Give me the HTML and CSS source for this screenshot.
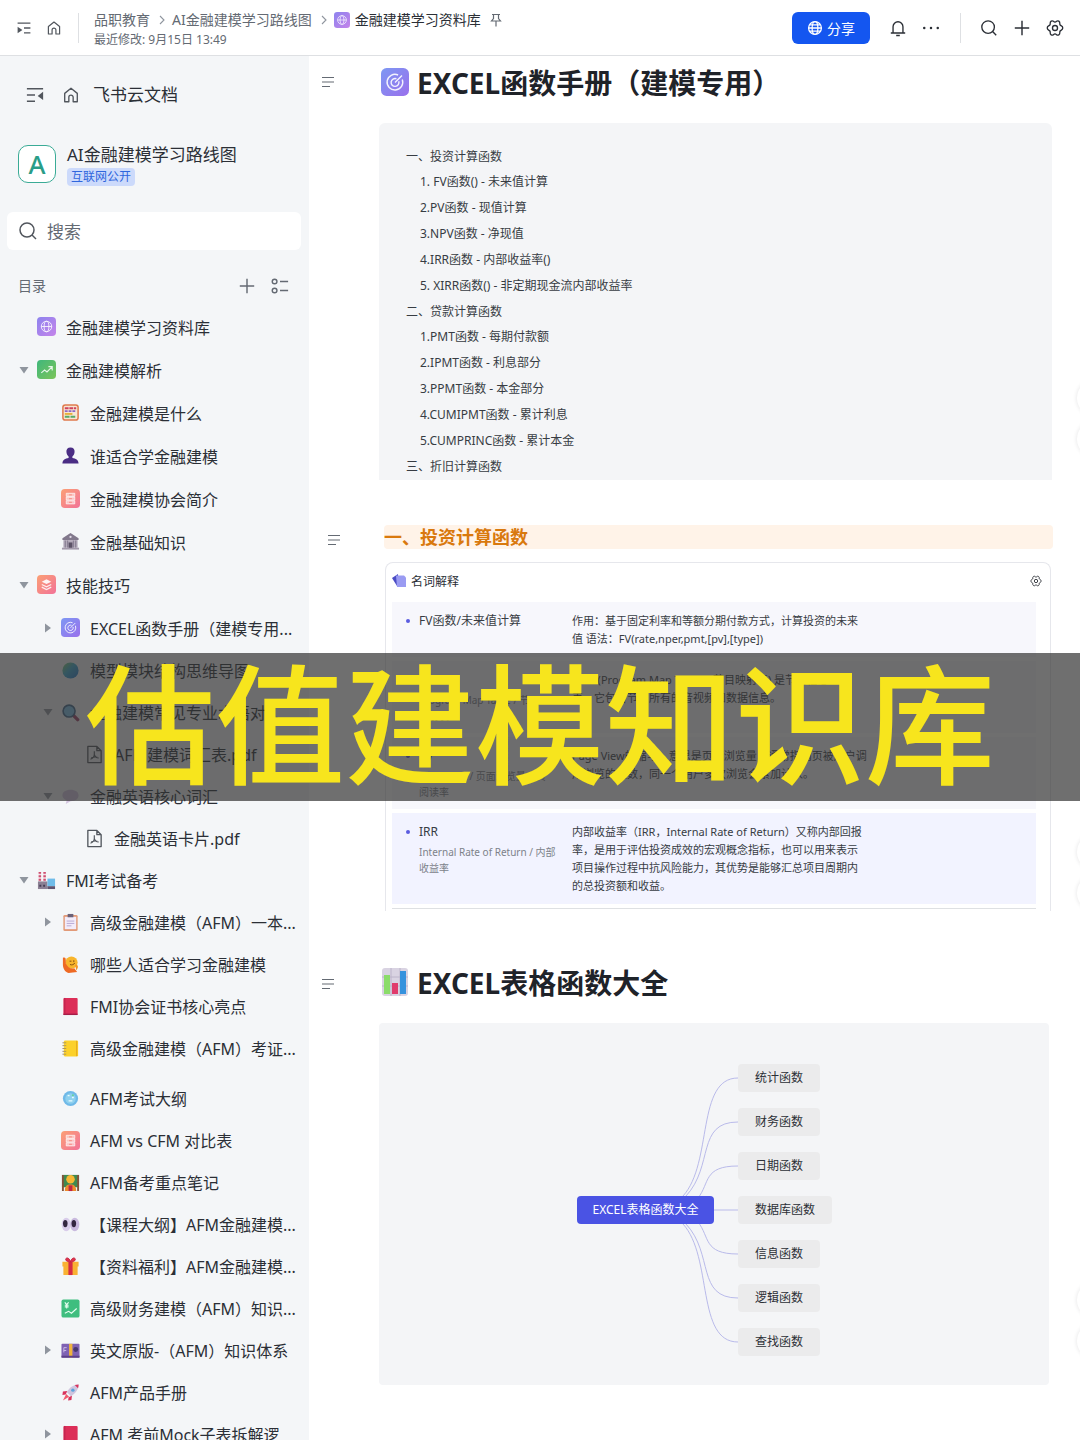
FILE: index.html
```html
<!DOCTYPE html>
<html lang="zh-CN">
<head>
<meta charset="utf-8">
<meta name="viewport" content="width=device-width, initial-scale=1">
<title>金融建模学习资料库</title>
<link rel="stylesheet" href="styles.css">
</head>
<body>
<svg class="sprite" aria-hidden="true">
  <defs>
    <linearGradient id="g-purple" x1="0" y1="0" x2="1" y2="1"><stop offset="0" stop-color="#8d83ee"/><stop offset="1" stop-color="#c584ea"/></linearGradient>
    <linearGradient id="g-green" x1="0" y1="0" x2="1" y2="1"><stop offset="0" stop-color="#3fb77c"/><stop offset="1" stop-color="#7cc45a"/></linearGradient>
    <linearGradient id="g-red" x1="0" y1="0" x2="1" y2="1"><stop offset="0" stop-color="#fba075"/><stop offset="1" stop-color="#f27298"/></linearGradient>
    <linearGradient id="g-blue" x1="0" y1="0" x2="1" y2="1"><stop offset="0" stop-color="#7d98f3"/><stop offset="1" stop-color="#9a70ec"/></linearGradient>
    <linearGradient id="g-globe" x1="0" y1="0" x2="1" y2="1"><stop offset="0" stop-color="#8fd06a"/><stop offset=".45" stop-color="#3aa9cf"/><stop offset="1" stop-color="#2472c8"/></linearGradient>
  </defs>
  <symbol id="home" viewBox="0 0 20 20"><path d="M3 8.2 10 2.5l7 5.7v9.3h-4.6v-5a2.4 2.4 0 0 0-4.8 0v5H3z" fill="none" stroke="currentColor" stroke-width="1.5" stroke-linejoin="round"/></symbol>
  <symbol id="expand" viewBox="0 0 20 20"><path d="M2 4h16M10 10h8M10 16h8" stroke="currentColor" stroke-width="1.6"/><path d="M2 8.500v8l6-4z" fill="currentColor"/></symbol>
  <symbol id="collapse" viewBox="0 0 20 20"><path d="M1 3h18M1 10h9M1 17h9" stroke="currentColor" stroke-width="1.6"/><path d="M19 6.500v9l-6-4.500z" fill="currentColor"/></symbol>
  <symbol id="search" viewBox="0 0 20 20"><circle cx="9" cy="9" r="7" fill="none" stroke="currentColor" stroke-width="1.500"/><path d="m14 14 4 4" stroke="currentColor" stroke-width="1.5"/></symbol>
  <symbol id="plus" viewBox="0 0 20 20"><path d="M10 2v16M2 10h16" stroke="currentColor" stroke-width="1.6"/></symbol>
  <symbol id="gear" viewBox="0 0 20 20"><path d="M10 3.400C12 3.400 12 1 14.200 2.400S14.600 5.300 15.700 6.700 18.600 7.600 18.600 10 16.800 11.900 15.700 13.300 16.400 16.200 14.200 17.600 12 16.600 10 16.600 8 19 5.800 17.600 5.400 14.700 4.300 13.300 1.400 12.400 1.400 10 3.200 8.100 4.300 6.700 3.600 3.800 5.800 2.400 8 3.400 10 3.400z" fill="none" stroke="currentColor" stroke-width="1.500" stroke-linejoin="round"/><circle cx="10" cy="10" r="2.800" fill="none" stroke="currentColor" stroke-width="1.500"/></symbol>
  <symbol id="lines" viewBox="0 0 14 12"><path d="M1 1.500h12M1 6h12M1 10.500h8" stroke="currentColor" stroke-width="1.200"/></symbol>
  <symbol id="chev" viewBox="0 0 8 12"><path d="m2 2 4 4-4 4" fill="none" stroke="currentColor" stroke-width="1.100"/></symbol>
  <symbol id="pin" viewBox="0 0 14 14"><path d="M3 1.500h8M4.500 1.500v4L2.500 8h9l-2-2.500v-4M7 8v5.500" fill="none" stroke="currentColor" stroke-width="1.200"/></symbol>
  <symbol id="web" viewBox="0 0 20 20"><g fill="none" stroke="currentColor" stroke-width="1.600"><circle cx="10" cy="10" r="8"/><ellipse cx="10" cy="10" rx="3.600" ry="8"/><path d="M2 10h16M3.500 6h13M3.500 14h13"/></g></symbol>
  <symbol id="tri-d" viewBox="0 0 12 12"><path d="M1.500 3h9L6 9.500z" fill="#8f959e"/></symbol>
  <symbol id="tri-r" viewBox="0 0 12 12"><path d="M3 1.500v9L9 6z" fill="#8f959e"/></symbol>
  <symbol id="i-lib" viewBox="0 0 20 20"><rect width="20" height="20" rx="4" fill="url(#g-purple)"/><g fill="none" stroke="#fff" stroke-opacity=".85"><circle cx="10" cy="10" r="5.500"/><ellipse cx="10" cy="10" rx="2.500" ry="5.500"/><path d="M4.500 10h11"/></g></symbol>
  <symbol id="i-trend" viewBox="0 0 20 20"><rect width="20" height="20" rx="4" fill="url(#g-green)"/><path d="m4.500 13.500 3.500-3 2.500 2 5-5M12 7h4v4" fill="none" stroke="#fff" stroke-opacity=".85" stroke-width="1.200"/></symbol>
  <symbol id="i-stack" viewBox="0 0 20 20"><rect width="20" height="20" rx="4" fill="url(#g-red)"/><path d="m10 4.500 5 2.500-5 2.500L5 7z" fill="#fff" fill-opacity=".9"/><path d="m5 10 5 2.500 5-2.500M5 12.800l5 2.500 5-2.500" fill="none" stroke="#fff" stroke-opacity=".85" stroke-width="1.300"/></symbol>
  <symbol id="i-drawer" viewBox="0 0 20 20"><rect width="20" height="20" rx="4" fill="url(#g-red)"/><path d="M5.500 4.500h9v3.300h-9zM5.500 8.500h9v3.200h-9zM5.500 12.400h9v3.300h-9z" fill="#fff" fill-opacity=".5" stroke="#fff" stroke-width=".7"/><path d="M8.500 6.200h3M8.500 10.200h3M8.500 14h3" stroke="#f58a80"/></symbol>
  <symbol id="i-target" viewBox="0 0 20 20"><rect width="20" height="20" rx="4" fill="url(#g-blue)"/><g fill="none" stroke="#fff" stroke-opacity=".9"><path d="M12.200 5a5.600 5.600 0 1 0 3 3.200M11 7.700a2.800 2.800 0 1 0 1.700 1.800M10 10.300l5-5"/></g></symbol>
  <symbol id="i-abacus" viewBox="0 0 20 20"><rect x="2" y="2" width="16" height="16" rx="2.500" fill="#f7e6d3" stroke="#e07b4e" stroke-width="1.600"/><path d="M4 5.500h12" stroke="#d0415e" stroke-width="2" stroke-dasharray="4 .8"/><path d="M4 8.500h12" stroke="#8c68c8" stroke-width="2" stroke-dasharray="3 1"/><path d="M4 11.500h8" stroke="#e6b13e" stroke-width="2"/><path d="M4 14.500h12" stroke="#58a968" stroke-width="2" stroke-dasharray="5 1"/></symbol>
  <symbol id="i-person" viewBox="0 0 20 20"><path d="M10 1.500c3 0 4.600 2 4.300 4.800-.3 2.600-1.500 4-2.300 4.700v1.600c3.500.6 6.300 1.600 6.500 5.900h-17C1.700 14.200 4.500 13.200 8 12.600V11C7.200 10.300 6 8.900 5.700 6.300 5.400 3.500 7 1.500 10 1.500z" fill="#4a2d84"/></symbol>
  <symbol id="i-bank" viewBox="0 0 20 20"><path d="m10 1 8.500 5.500v2h-17v-2z" fill="#81788c"/><path d="M2.500 8.500h15v8h-15z" fill="#b3aaba"/><path d="M4.500 9v7.500M7 9v7.500M13 9v7.500M15.500 9v7.500" stroke="#81788c"/><path d="M8 11h4v6H8z" fill="#5b5266"/><path d="M1 16.500h18v2H1z" fill="#a39aab"/><circle cx="10" cy="5.200" r="1.200" fill="#e0d9e6"/></symbol>
  <symbol id="i-globe" viewBox="0 0 20 20"><circle cx="10" cy="10" r="8.500" fill="url(#g-globe)"/></symbol>
  <symbol id="i-mag" viewBox="0 0 20 20"><path d="m12.500 12.500 5 5" stroke="#9d3f65" stroke-width="3.600" stroke-linecap="round"/><circle cx="8.500" cy="8.500" r="6.300" fill="#79bfe8" stroke="#3f668b" stroke-width="1.700"/></symbol>
  <symbol id="i-pdf" viewBox="0 0 20 20"><path d="M3 1.500h9.500l4.500 4.500v12.500H3zM12.500 1.500V6H17" fill="none" stroke="#51565d" stroke-width="1.400" stroke-linejoin="round"/><path d="M9.800 6.500v3.300c0 2.200-1.700 4.300-4 5.200M9.800 10c.5 2 2 3.500 4.700 3.700M6.500 13.800c2.200-1.200 4.500-1.500 6.500-.800" fill="none" stroke="#51565d" stroke-width="1.200"/></symbol>
  <symbol id="i-bubble" viewBox="0 0 20 20"><path d="M10 3c5 0 8.500 2.300 8.500 6s-3.500 6-8.500 6l-5 3 1-4C3.300 13 1.500 11.300 1.500 9c0-3.700 3.500-6 8.500-6z" fill="#d3c3df"/></symbol>
  <symbol id="i-factory" viewBox="0 0 20 20"><path d="M3 1v11M8 1v11" stroke="#f3dfe6" stroke-width="2.600"/><path d="M3 1v11M8 1v11" stroke="#cf4f70" stroke-width="2.600" stroke-dasharray="2 1.600"/><path d="M1 11h10v8H1z" fill="#8b8094"/><path d="M11 8h8v8h-8z" fill="#6fbce9"/><path d="M11 16h8v3h-8z" fill="#5e5470"/><path d="M2.500 15.500h2M6.500 15.500h2" stroke="#463d55" stroke-width="2"/></symbol>
  <symbol id="i-clip" viewBox="0 0 20 20"><rect x="2.500" y="2" width="15" height="17" rx="1.500" fill="#e29a78"/><path d="M4 4h12v13H4z" fill="#f3ecfa"/><path d="M6 8.500h8M6 11h8M6 13.500h5" stroke="#b7a8d3"/><path d="M7 1h6v3.500H7z" fill="#6a6178"/></symbol>
  <symbol id="i-hand" viewBox="0 0 20 20"><circle cx="11" cy="8" r="6.500" fill="#f8b52c"/><path d="M2 3c2-1 3 0 3 2v4c2 4 5 6 9 5l3 4-9 1c-4-1-6-5-6-9z" fill="#ee6a24"/><path d="M9 6.500h2M13.500 5.500v2M9.500 10c2 1 4 0 5-1.500" fill="none" stroke="#7c4a12"/><path d="M15 10c3 0 4 3 1 6z" fill="#f39325"/></symbol>
  <symbol id="i-book" viewBox="0 0 20 20"><rect x="2.500" y="1" width="15" height="18" rx="1" fill="#dc2e58"/><path d="M2.500 17.500h15v1.500h-15z" fill="#a51d48"/><path d="M4 1v16.500" stroke="#b8224c"/></symbol>
  <symbol id="i-note" viewBox="0 0 20 20"><rect x="3" y="1.500" width="15" height="17" rx="1.500" fill="#fcd12a"/><path d="M16.500 2v16" stroke="#e2a41d"/><path d="M1.500 4h4M1.500 7h4M1.500 10h4M1.500 13h4M1.500 16h4" stroke="#a79364"/></symbol>
  <symbol id="i-orb" viewBox="0 0 20 20"><circle cx="10" cy="10" r="8" fill="#6fb9e8"/><circle cx="10" cy="10" r="5.500" fill="#8dd0ee"/><path d="M7 7h2M11.500 9h2M8 12.500h4" stroke="#e9fbff" stroke-width="1.500"/><circle cx="12.500" cy="6.500" r="1.100" fill="#64d19a"/></symbol>
  <symbol id="i-teach" viewBox="0 0 20 20"><path d="M1 2h18v13H1z" fill="#3f8a50"/><path d="M1 2h2v17H1zM17 2h2v17h-2z" fill="#82543a"/><circle cx="10" cy="6.500" r="4.500" fill="#f7b733"/><path d="M4 19c0-5 2-7 6-7s6 2 6 7z" fill="#ee8b2e"/><path d="M8 13h4v6H8z" fill="#bd2745"/></symbol>
  <symbol id="i-eyes" viewBox="0 0 20 20"><ellipse cx="5.500" cy="10" rx="4.800" ry="7" fill="#d9cdea"/><ellipse cx="14.500" cy="10" rx="4.800" ry="7" fill="#c9bade"/><ellipse cx="4.500" cy="9" rx="2.400" ry="3.800" fill="#32263f"/><ellipse cx="13.500" cy="9" rx="2.400" ry="3.800" fill="#32263f"/></symbol>
  <symbol id="i-gift" viewBox="0 0 20 20"><path d="M1.500 5h17v5h-17zM2.500 10h15v9h-15z" fill="#f9b233"/><path d="M7.800 5h4.400v14H7.800z" fill="#d62b45"/><path d="M10 5C7 5 4.500 4 5 2c1-2 4-1 5 3 1-4 4-5 5-3 .5 2-2 3-5 3z" fill="#e0334b" stroke="#c42340"/></symbol>
  <symbol id="i-yen" viewBox="0 0 20 20"><rect x=".5" y=".5" width="19" height="19" rx="2" fill="#3fbe7f"/><path d="m4 3.500 2 2.500 2-2.500M6 6v4M4 6.500h4M4 8.300h4M4 15l4-2 3 2 5.500-5" fill="none" stroke="#e9fff3" stroke-width="1.100"/></symbol>
  <symbol id="i-card" viewBox="0 0 20 20"><rect x=".5" y="3" width="19" height="14.500" rx="1" fill="#7f62b3"/><path d="M8.500 3h3.500v14.500H8.500z" fill="#f0b33c"/><circle cx="15.500" cy="9" r="2.600" fill="#47376f"/><path d="M3 7h3M3 10h2.500M3 7v5" stroke="#cdbbe9"/><path d="M.5 15.500h19v2H.5z" fill="#5d4188"/></symbol>
  <symbol id="i-rocket" viewBox="0 0 20 20"><path d="M18.500 1.500c0 5-3 9-8 12.500L6 9.500C9 4.500 13.500 1.500 18.500 1.500z" fill="#cfc5de"/><path d="M14.500 2.200c1.400-.5 2.700-.7 4-.7 0 1.400-.2 2.700-.6 4z" fill="#d8325b"/><path d="M6.500 8.500 2 9l-.5 3.500L5 12zM11.500 13.500 11 18l-3.500.5L8 15z" fill="#d8325b"/><circle cx="12.500" cy="7.500" r="1.800" fill="#5ba4dc"/><path d="m5.500 11.500 3 3-6.500 4z" fill="#f15a6c"/></symbol>
  <symbol id="i-chart" viewBox="0 0 26 28"><rect width="26" height="28" rx="3" fill="#d9d3e2"/><path d="M0 9h26M0 18h26M9 0v28M18 0v28" stroke="#bcb4ca"/><path d="M2 7h6v19H2z" fill="#8bdc6a"/><path d="M10 15h6v11h-6z" fill="#e03b6c"/><path d="M18 3h6v23h-6z" fill="#3592dd"/></symbol>
</svg>

<header class="topbar">
  <button class="icon-btn" aria-label="展开目录"><svg class="s16"><use href="#expand"/></svg></button>
  <a class="icon-btn top-home" href="#" aria-label="主页"><svg class="s16"><use href="#home"/></svg></a>
  <span class="vline"></span>
  <div class="crumb-box">
    <nav class="crumbs" aria-label="路径">
      <a href="#">品职教育</a>
      <svg class="chev"><use href="#chev"/></svg>
      <a href="#">AI金融建模学习路线图</a>
      <svg class="chev"><use href="#chev"/></svg>
      <a class="current" href="#"><svg class="s16"><use href="#i-lib"/></svg>金融建模学习资料库</a>
      <button class="icon-btn pin" aria-label="固定"><svg class="s14"><use href="#pin"/></svg></button>
    </nav>
    <p class="modified">最近修改: 9月15日 13:49</p>
  </div>
  <div class="actions">
    <button class="share"><svg class="s16"><use href="#web"/></svg>分享</button>
    <button class="icon-btn" aria-label="通知"><svg class="s18" viewBox="0 0 20 20"><path d="M4.500 15.500V8.500a5.500 5.500 0 0 1 11 0v7M2 15.500h16M8 18.300h4" fill="none" stroke="currentColor" stroke-width="1.500"/></svg></button>
    <button class="icon-btn" aria-label="更多"><svg class="s18" viewBox="0 0 20 20"><g fill="currentColor"><circle cx="2.500" cy="10" r="1.400"/><circle cx="10" cy="10" r="1.400"/><circle cx="17.500" cy="10" r="1.400"/></g></svg></button>
    <span class="vline"></span>
    <button class="icon-btn" aria-label="搜索"><svg class="s18"><use href="#search"/></svg></button>
    <button class="icon-btn" aria-label="新建"><svg class="s18"><use href="#plus"/></svg></button>
    <button class="icon-btn" aria-label="设置"><svg class="s18"><use href="#gear"/></svg></button>
  </div>
</header>

<div class="shell">
  <aside class="sidebar">
    <div class="brand">
      <button class="icon-btn" aria-label="收起目录"><svg class="s18"><use href="#collapse"/></svg></button>
      <a class="brand-link" href="#"><svg class="s18"><use href="#home"/></svg>飞书云文档</a>
    </div>
    <div class="space">
      <span class="avatar">A</span>
      <div class="space-info">
        <p class="space-name">AI金融建模学习路线图</p>
        <span class="tag">互联网公开</span>
      </div>
    </div>
    <label class="searchbox"><svg class="s20"><use href="#search"/></svg><input type="search" placeholder="搜索" aria-label="搜索"></label>
    <div class="toc-head">
      <span>目录</span>
      <button class="icon-btn" aria-label="添加"><svg class="s18"><use href="#plus"/></svg></button>
      <button class="icon-btn" aria-label="目录设置"><svg class="s18" viewBox="0 0 20 20"><g fill="none" stroke="currentColor" stroke-width="1.600"><circle cx="4" cy="5" r="2.600"/><circle cx="4" cy="15" r="2.600"/><path d="M10 5h9M10 15h9"/></g></svg></button>
    </div>
    <nav class="tree" aria-label="目录">
      <ul class="group roomy">
        <li><a class="row" href="#"><span class="arrow"></span><svg class="ico"><use href="#i-lib"/></svg>金融建模学习资料库</a></li>
        <li><a class="row" href="#"><svg class="arrow"><use href="#tri-d"/></svg><svg class="ico"><use href="#i-trend"/></svg>金融建模解析</a></li>
        <li><a class="row l2" href="#"><span class="arrow"></span><svg class="ico"><use href="#i-abacus"/></svg>金融建模是什么</a></li>
        <li><a class="row l2" href="#"><span class="arrow"></span><svg class="ico"><use href="#i-person"/></svg>谁适合学金融建模</a></li>
        <li><a class="row l2" href="#"><span class="arrow"></span><svg class="ico"><use href="#i-drawer"/></svg>金融建模协会简介</a></li>
        <li><a class="row l2" href="#"><span class="arrow"></span><svg class="ico"><use href="#i-bank"/></svg>金融基础知识</a></li>
        <li><a class="row" href="#"><svg class="arrow"><use href="#tri-d"/></svg><svg class="ico"><use href="#i-stack"/></svg>技能技巧</a></li>
        <li><a class="row l2" href="#"><svg class="arrow"><use href="#tri-r"/></svg><svg class="ico"><use href="#i-target"/></svg>EXCEL函数手册（建模专用...</a></li>
      </ul>
      <ul class="group">
        <li><a class="row l2" href="#"><span class="arrow"></span><svg class="ico"><use href="#i-globe"/></svg>模型模块结构思维导图</a></li>
        <li><a class="row l2" href="#"><svg class="arrow"><use href="#tri-d"/></svg><svg class="ico"><use href="#i-mag"/></svg>金融建模常见专业术语对...</a></li>
        <li><a class="row l3" href="#"><span class="arrow"></span><svg class="ico"><use href="#i-pdf"/></svg>AFM建模词汇表.pdf</a></li>
        <li><a class="row l2" href="#"><svg class="arrow"><use href="#tri-d"/></svg><svg class="ico"><use href="#i-bubble"/></svg>金融英语核心词汇</a></li>
        <li><a class="row l3" href="#"><span class="arrow"></span><svg class="ico"><use href="#i-pdf"/></svg>金融英语卡片.pdf</a></li>
        <li><a class="row" href="#"><svg class="arrow"><use href="#tri-d"/></svg><svg class="ico"><use href="#i-factory"/></svg>FMI考试备考</a></li>
        <li><a class="row l2" href="#"><svg class="arrow"><use href="#tri-r"/></svg><svg class="ico"><use href="#i-clip"/></svg>高级金融建模（AFM）一本...</a></li>
        <li><a class="row l2" href="#"><span class="arrow"></span><svg class="ico"><use href="#i-hand"/></svg>哪些人适合学习金融建模</a></li>
        <li><a class="row l2" href="#"><span class="arrow"></span><svg class="ico"><use href="#i-book"/></svg>FMI协会证书核心亮点</a></li>
        <li><a class="row l2" href="#"><span class="arrow"></span><svg class="ico"><use href="#i-note"/></svg>高级金融建模（AFM）考证...</a></li>
      </ul>
      <ul class="group">
        <li><a class="row l2" href="#"><span class="arrow"></span><svg class="ico"><use href="#i-orb"/></svg>AFM考试大纲</a></li>
        <li><a class="row l2" href="#"><span class="arrow"></span><svg class="ico"><use href="#i-drawer"/></svg>AFM vs CFM 对比表</a></li>
        <li><a class="row l2" href="#"><span class="arrow"></span><svg class="ico"><use href="#i-teach"/></svg>AFM备考重点笔记</a></li>
        <li><a class="row l2" href="#"><span class="arrow"></span><svg class="ico"><use href="#i-eyes"/></svg>【课程大纲】AFM金融建模...</a></li>
        <li><a class="row l2" href="#"><span class="arrow"></span><svg class="ico"><use href="#i-gift"/></svg>【资料福利】AFM金融建模...</a></li>
        <li><a class="row l2" href="#"><span class="arrow"></span><svg class="ico"><use href="#i-yen"/></svg>高级财务建模（AFM）知识...</a></li>
        <li><a class="row l2" href="#"><svg class="arrow"><use href="#tri-r"/></svg><svg class="ico"><use href="#i-card"/></svg>英文原版-（AFM）知识体系</a></li>
        <li><a class="row l2" href="#"><span class="arrow"></span><svg class="ico"><use href="#i-rocket"/></svg>AFM产品手册</a></li>
        <li><a class="row l2" href="#"><svg class="arrow"><use href="#tri-r"/></svg><svg class="ico"><use href="#i-book"/></svg>AFM 考前Mock子表拆解逻</a></li>
      </ul>
    </nav>
  </aside>

  <main class="doc">
    <section class="block">
      <button class="icon-btn outline" aria-label="大纲"><svg class="s14"><use href="#lines"/></svg></button>
      <div class="content">
        <h1 class="title"><svg class="s28"><use href="#i-target"/></svg>EXCEL函数手册（建模专用）</h1>
        <div class="listing">
          <h3>一、投资计算函数</h3>
          <ul>
            <li>1. FV函数() - 未来值计算</li>
            <li>2.PV函数 - 现值计算</li>
            <li>3.NPV函数 - 净现值</li>
            <li>4.IRR函数 - 内部收益率()</li>
            <li>5. XIRR函数() - 非定期现金流内部收益率</li>
          </ul>
          <h3>二、贷款计算函数</h3>
          <ul>
            <li>1.PMT函数 - 每期付款额</li>
            <li>2.IPMT函数 - 利息部分</li>
            <li>3.PPMT函数 - 本金部分</li>
            <li>4.CUMIPMT函数 - 累计利息</li>
            <li>5.CUMPRINC函数 - 累计本金</li>
          </ul>
          <h3>三、折旧计算函数</h3>
        </div>
      </div>
    </section>

    <section class="block terms">
      <button class="icon-btn outline" aria-label="大纲"><svg class="s14"><use href="#lines"/></svg></button>
      <div class="content">
        <h2 class="marked">一、投资计算函数</h2>
        <div class="card">
          <div class="card-head">
            <svg class="s14" viewBox="0 0 14 14"><path d="M0 4 6 0l1 13-2-1z" fill="#4b4cc4"/><path d="M4 1.500h8l2 2V13H5z" fill="#9a9bf2"/></svg>
            <span>名词解释</span>
            <button class="icon-btn" aria-label="设置"><svg class="s12"><use href="#gear"/></svg></button>
          </div>
          <table class="glossary">
            <tbody>
              <tr><th scope="row">FV函数/未来值计算</th><td>作用：基于固定利率和等额分期付款方式，计算投资的未来<br>值 语法：FV(rate,nper,pmt,[pv],[type])</td></tr>
              <tr><th scope="row">PMT<small>Program Map Table / 节目<br>映射表</small></th><td>PMT (Program Map Table，节目映射表) 是节目信息一览<br>表，它包含节目所有的音视频和数据信息。</td></tr>
              <tr><th scope="row">PV<small>Page View / 页面浏览量或页<br>阅读率</small></th><td>Page View的缩写，意思是页面浏览量，通常指网页被用户调<br>用浏览的次数，同一个用户多次浏览会累加计入。</td></tr>
              <tr class="active"><th scope="row">IRR<small>Internal Rate of Return / 内部<br>收益率</small></th><td>内部收益率（IRR，Internal Rate of Return）又称内部回报<br>率，是用于评估投资成效的宏观概念指标，也可以用来表示<br>项目操作过程中抗风险能力，其优势是能够汇总项目周期内<br>的总投资额和收益。</td></tr>
            </tbody>
          </table>
        </div>
      </div>
    </section>

    <section class="block sheet">
      <button class="icon-btn outline" aria-label="大纲"><svg class="s14"><use href="#lines"/></svg></button>
      <div class="content">
        <h1 class="title"><svg class="s28"><use href="#i-chart"/></svg>EXCEL表格函数大全</h1>
        <div class="board">
          <div class="map">
            <svg class="links" viewBox="0 0 161 292"><g fill="none" stroke="#b9baea"><path d="M106 132C136 99 119 14 161 14"/><path d="M109 132C137 102 119 58 161 58"/><path d="M121 134C133 119 126 102 161 102"/><path d="M130 146h31"/><path d="M121 158C133 173 126 190 161 190"/><path d="M109 160C137 190 119 234 161 234"/><path d="M106 160C136 193 119 278 161 278"/></g></svg>
            <span class="root">EXCEL表格函数大全</span>
            <ul class="nodes">
              <li>统计函数</li>
              <li>财务函数</li>
              <li>日期函数</li>
              <li>数据库函数</li>
              <li>信息函数</li>
              <li>逻辑函数</li>
              <li>查找函数</li>
            </ul>
          </div>
        </div>
      </div>
    </section>
    <div class="float f1"><span></span><span></span></div>
    <div class="float f2"><span></span><span></span></div>
    <div class="float f3"><span></span><span></span></div>
  </main>
</div>

<div class="banner">估值建模知识库</div>
</body>
</html>
```

FILE: styles.css
```css
* { box-sizing: border-box; margin: 0; padding: 0; }

body {
  position: relative;
  display: flex;
  flex-direction: column;
  height: 100vh;
  overflow: hidden;
  font-family: "Noto Sans", "Noto Sans CJK SC", sans-serif;
  font-size: 12px;
  color: #2b2f36;
  background: #fff;
}

ul { list-style: none; }
a { color: inherit; text-decoration: none; }
svg { display: block; flex: none; }
.sprite { position: absolute; width: 0; height: 0; }

button { font: inherit; color: inherit; border: 0; background: none; cursor: pointer; }
.icon-btn { display: flex; flex: none; }

.s12 { width: 12px; height: 12px; }
.s14 { width: 14px; height: 14px; }
.s16 { width: 16px; height: 16px; }
.s18 { width: 18px; height: 18px; }
.s20 { width: 20px; height: 20px; }
.s28 { width: 28px; height: 28px; }

/* Top bar */
.topbar {
  display: flex;
  align-items: center;
  flex: none;
  height: 56px;
  padding: 0 16px;
  border-bottom: 1px solid #dee0e3;
  color: #51565d;
}
.top-home { margin-left: 14px; }
.vline { width: 1px; height: 30px; background: #dee0e3; }
.topbar > .vline { margin: 0 15px 0 16px; }
.crumb-box { padding-top: 4px; line-height: 20px; color: #646a73; }
.crumbs { display: flex; align-items: center; font-size: 14px; white-space: nowrap; }
.chev { width: 8px; height: 12px; margin: 0 6px 0 8px; color: #8f959e; }
.current { display: flex; align-items: center; gap: 5px; color: #2b2f36; }
.pin { margin-left: 8px; }
.actions { display: flex; align-items: center; gap: 15px; margin-left: auto; color: #2b2f36; }
.share {
  display: flex;
  align-items: center;
  gap: 4px;
  height: 32px;
  margin-right: 4px;
  padding: 0 15px;
  border-radius: 6px;
  background: #1456f0;
  color: #fff;
  font-size: 14px;
}
.actions .vline { margin: 0 4px 0 5px; }

.shell { display: flex; flex: 1; min-height: 0; }

/* Sidebar */
.sidebar {
  flex: none;
  width: 309px;
  overflow: hidden;
  background: #f4f6f8;
}
.brand { display: flex; align-items: center; gap: 18px; padding: 26px 26px 0; color: #51565d; }
.brand-link { display: flex; align-items: center; gap: 13px; font-size: 17px; line-height: 26px; color: #2b2f36; }
.brand-link svg { color: #51565d; }
.space { display: flex; align-items: center; gap: 11px; padding: 34px 18px 0; }
.avatar {
  display: flex;
  align-items: center;
  justify-content: center;
  width: 38px;
  height: 38px;
  border: 1px solid #3aab96;
  border-radius: 10px;
  background: #fff;
  color: #2a9d88;
  font-size: 26px;
  font-weight: 500;
}
.space-name { font-size: 17px; line-height: 26px; }
.tag {
  display: block;
  width: max-content;
  padding: 0 4px;
  border-radius: 4px;
  background: #ccdafb;
  color: #2f66dd;
  line-height: 18px;
}
.searchbox {
  display: flex;
  align-items: center;
  gap: 9px;
  height: 38px;
  margin: 26px 8px 0 7px;
  padding: 0 11px;
  border-radius: 6px;
  background: #fff;
  color: #51565d;
}
.searchbox input { flex: 1; min-width: 0; border: 0; outline: 0; background: none; font: inherit; font-size: 17px; }
.searchbox input::placeholder { color: #646a73; }
.toc-head { display: flex; align-items: center; gap: 15px; padding: 25px 20px 8px 18px; font-size: 14px; line-height: 22px; color: #646a73; }
.toc-head span { margin-right: auto; }
.group:last-child { margin-top: 8px; }
.row {
  display: flex;
  align-items: center;
  height: 42px;
  padding-left: 18px;
  font-size: 16px;
  white-space: nowrap;
}
.roomy .row { height: 43px; }
.l2 { padding-left: 42px; }
.l3 { padding-left: 66px; }
.arrow { flex: none; width: 12px; height: 12px; }
.ico { width: 19px; height: 19px; margin: 0 10px 0 7px; }

/* Document */
.doc { position: relative; flex: 1; min-width: 0; overflow: hidden; padding-right: 28px; }
.block { display: flex; align-items: flex-start; padding-left: 12px; }
.outline { flex: none; width: 58px; color: #646a73; }
.content { flex: 1; min-width: 0; }
.block .outline { margin-top: 19px; }
.title { display: flex; align-items: center; gap: 8px; height: 52px; padding-left: 2px; font-size: 28px; font-weight: 700; color: #1f2329; white-space: nowrap; }
.listing { margin-top: 15px; padding: 21px 27px 0; height: 357px; border-radius: 6px 6px 0 0; background: #f4f5f7; color: #373c43; }
.listing h3 { font-size: 12px; font-weight: 400; line-height: 25px; }
.listing li { padding-left: 14px; line-height: 26px; }

.terms { margin-top: 45px; padding-left: 18px; }
.terms .outline { margin-top: 8px; width: 57px; }
.terms .content { margin-right: -1px; }
.marked { border-radius: 4px; background: #fff3e8; color: #d9790d; font-size: 18px; line-height: 24px; }
.card { margin: 13px 2px 0 1px; padding: 0 14px 2px 6px; border: 1px solid #e6e7ec; border-bottom: 0; border-radius: 8px 8px 0 0; }
.card-head { display: flex; align-items: center; gap: 5px; height: 35px; margin-right: -6px; color: #2b2f36; }
.card-head .icon-btn { margin-left: auto; }
.glossary { width: 100%; border-spacing: 0 4px; border-bottom: 1px solid #dee0e3; }
.glossary tr { background: #f7f7fc; }
.glossary .active { background: #f2f3ff; }
.glossary th, .glossary td { padding: 10px 0 9px; font-size: 11px; font-weight: 400; line-height: 18px; text-align: left; vertical-align: top; color: #373c43; white-space: nowrap; }
.glossary th { position: relative; width: 180px; padding-left: 27px; font-size: 12px; }
.glossary th::before { content: ""; position: absolute; left: 14px; top: 17px; width: 4px; height: 4px; border-radius: 50%; background: #5a5ce0; }
.glossary small { display: block; margin-top: 3px; font-size: 10px; line-height: 16px; color: #7d828a; }

.sheet { margin-top: 45px; }
.sheet .outline { margin-top: 21px; }
.board { margin: 15px 3px 0 0; padding: 41px 0 29px 198px; border-radius: 4px; background: #f4f5f7; }
.map { position: relative; display: flex; align-items: center; gap: 24px; }
.links { position: absolute; left: 0; top: 0; width: 161px; height: 292px; }
.root { position: relative; width: 137px; border-radius: 4px; background: #4a53e4; color: #fff; line-height: 28px; text-align: center; white-space: nowrap; }
.nodes { position: relative; display: flex; flex-direction: column; align-items: flex-start; gap: 16px; }
.nodes li { padding: 0 17px; border-radius: 4px; background: #ebebec; line-height: 28px; }

/* Floating tools that sit against the right edge of the window */
.float { position: absolute; right: -33px; display: grid; gap: 5px; }
.float span { width: 36px; height: 36px; border-radius: 50%; background: #fff; box-shadow: 0 0 4px #1f23291f; }
.f1 { top: 324px; }
.f2 { top: 778px; }
.f3 { top: 1226px; }

/* Caption laid across the page */
.banner {
  position: absolute;
  top: 653px;
  left: 0;
  right: 0;
  height: 148px;
  background: #323232b3;
  color: #f7e51d;
  font-family: "Noto Sans CJK SC", sans-serif;
  font-size: 130px;
  font-weight: 500;
  line-height: 128px;
  text-align: center;
  white-space: nowrap;
}
```
